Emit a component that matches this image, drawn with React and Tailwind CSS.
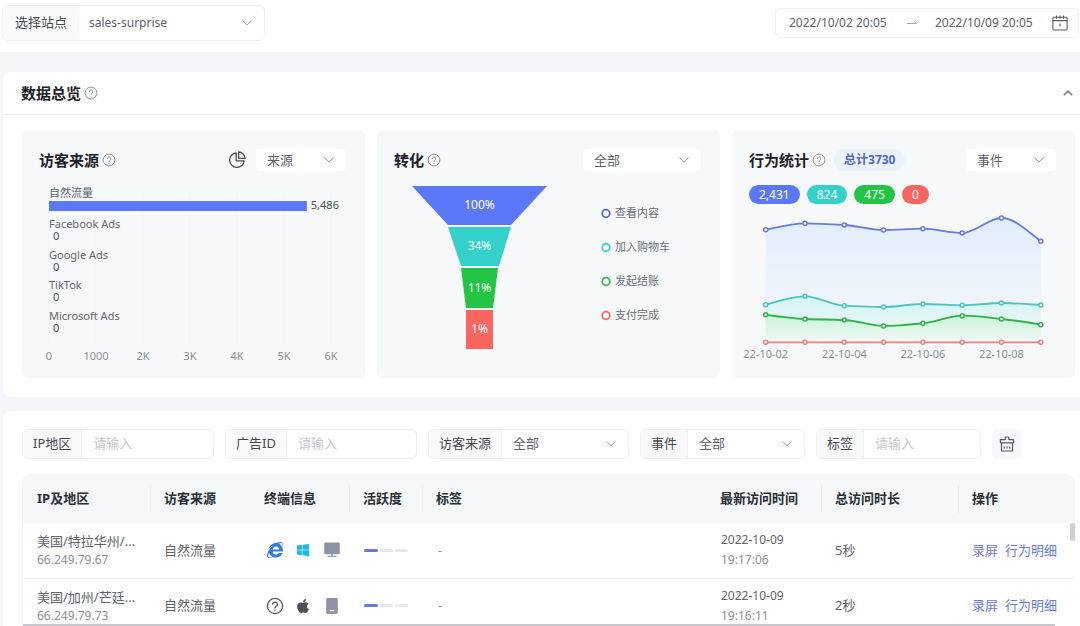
import React from "react";
import { FaInternetExplorer, FaWindows, FaApple } from "react-icons/fa";

const BLUE = "#5b78fb";
const TEAL = "#33d1c9";
const GREEN = "#23c343";
const RED = "#fb6560";

function HelpIcon({ className = "size-[14px] text-[#8f949c]" }) {
  return (
    <svg viewBox="0 0 14 14" className={"shrink-0 " + className} fill="none" stroke="currentColor" aria-hidden="true">
      <circle cx="7" cy="7" r="5.9" strokeWidth="1" />
      <path d="M5.2 5.7a1.8 1.8 0 1 1 2.7 1.6c-.6.35-.9.65-.9 1.3" strokeWidth="1" strokeLinecap="round" />
      <circle cx="7" cy="10.3" r=".6" fill="currentColor" stroke="none" />
    </svg>
  );
}

function Chevron({ className }) {
  return (
    <svg viewBox="0 0 10 6" className={"pointer-events-none absolute top-1/2 h-[6px] w-[10px] -translate-y-1/2 " + className} fill="none" stroke="#a3a8b0" strokeWidth="1" strokeLinecap="round" strokeLinejoin="round" aria-hidden="true">
      <path d="M.8.8 5 5 9.2.8" />
    </svg>
  );
}

function SmallSelect({ label, value, className }) {
  return (
    <div className={"relative h-[22px] rounded-[5px] bg-white " + className}>
      <select aria-label={label} defaultValue={value} className="block h-full w-full appearance-none bg-transparent pl-[11px] pr-6 text-[13px] leading-5 text-[#5d626b] outline-none">
        <option>{value}</option>
      </select>
      <Chevron className="right-3" />
    </div>
  );
}

function Field({ id, label, value, className }) {
  return (
    <div className={"flex h-[30px] min-w-0 overflow-hidden rounded-[6px] border border-[#eff0f2] " + className}>
      <label htmlFor={id} className="flex shrink-0 items-center whitespace-nowrap border-r border-[#eff0f2] bg-[#fafafb] px-[10px] text-[13px] text-[#45494f]">
        {label}
      </label>
      {value ? (
        <div className="relative min-w-0 flex-1">
          <select id={id} defaultValue={value} className="h-full w-full appearance-none bg-transparent pl-[11px] pr-6 text-[13px] text-[#5d626b] outline-none">
            <option>{value}</option>
          </select>
          <Chevron className="right-3" />
        </div>
      ) : (
        <input id={id} type="text" placeholder="请输入" className="w-full min-w-0 flex-1 px-[11px] text-[13px] text-[#5d626b] outline-none placeholder:text-[#c4c7cc]" />
      )}
    </div>
  );
}

function CardTitle({ children }) {
  return (
    <div className="flex items-center gap-[3px]">
      <h3 className="whitespace-nowrap text-[15px] font-bold leading-[22px] text-[#1d2129]">{children}</h3>
      <HelpIcon />
    </div>
  );
}

const sources = [
  { name: "自然流量", value: 5486 },
  { name: "Facebook Ads", value: 0 },
  { name: "Google Ads", value: 0 },
  { name: "TikTok", value: 0 },
  { name: "Microsoft Ads", value: 0 },
];
const ticks = ["0", "1000", "2K", "3K", "4K", "5K", "6K"];

function SourceChart() {
  return (
    <svg viewBox="0 0 343 200" className="block w-full text-[11px]" role="img" aria-label="访客来源">
      {ticks.map((t, i) => (
        <g key={t}>
          <line x1={27 + i * 47} x2={27 + i * 47} y1="14" y2="166" stroke="#f3f5f8" />
          <text x={27 + i * 47} y="182" textAnchor="middle" fill="#8a9099">{t}</text>
        </g>
      ))}
      {sources.map((s, i) => {
        const w = (s.value / 6000) * 282;
        return (
          <g key={s.name}>
            <text x="27" y={19 + i * 30.8} fill="#5f6670">{s.name}</text>
            <rect x="27" y={23 + i * 30.8} width={w} height="10" fill={BLUE} />
            <text x={31 + w} y={31 + i * 30.8} fill="#4a4f57">{s.value.toLocaleString("en-US")}</text>
          </g>
        );
      })}
    </svg>
  );
}

const funnel = [
  { name: "查看内容", pct: "100%", color: BLUE, ring: "#5468cf", points: "35,8 170,8 134,47 71,47" },
  { name: "加入购物车", pct: "34%", color: TEAL, ring: TEAL, points: "71,49 134,49 122,88 84,88" },
  { name: "发起结账", pct: "11%", color: GREEN, ring: "#35b556", points: "84,90 121,90 116,130 89,130" },
  { name: "支付完成", pct: "1%", color: RED, ring: RED, points: "89,132 116,132 116,171 89,171" },
];

function FunnelChart() {
  return (
    <svg viewBox="0 0 343 200" className="block w-full" role="img" aria-label="转化">
      {funnel.map((f, i) => (
        <g key={f.name}>
          <polygon points={f.points} fill={f.color} />
          <text x="102.5" y={30.5 + i * 41.5} textAnchor="middle" fill="#fff" className="text-[12px]">{f.pct}</text>
          <circle cx="229" cy={35.5 + i * 34} r="3.8" fill="#fff" stroke={f.ring} strokeWidth="1.8" />
          <text x="238" y={38.5 + i * 34} fill="#6b7078" className="text-[11px]">{f.name}</text>
        </g>
      ))}
    </svg>
  );
}

const series = [
  { line: "#6a7bd6", top: "#dfecfd", ys: [19.7, 13.3, 15, 20, 18.7, 23, 8, 31.3] },
  { line: "#4cc4be", top: "#d2f6f1", ys: [94.7, 86.3, 95.7, 97, 94, 95.3, 93, 95] },
  { line: "#2fb04a", top: "#cbf4d0", ys: [104.7, 109, 110, 116, 113.3, 105.7, 109, 114.7] },
  { line: "#ee7f7c", top: "#fde2e1", ys: [132.3, 132.3, 132.3, 132.3, 132.3, 132.3, 132.3, 132.3] },
];
const STEP = 39.3;
const X0 = 33.7;

// Cubic path whose tangents are flat at every local extreme.
function smooth(ys) {
  const d = ys.slice(1).map((y, i) => (y - ys[i]) / STEP);
  const m = ys.map((_, i) => {
    if (i === 0) return d[0] * 1.3;
    if (i === ys.length - 1) return d[i - 1] * 1.3;
    return d[i - 1] * d[i] <= 0 ? 0 : (2 * d[i - 1] * d[i]) / (d[i - 1] + d[i]);
  });
  let path = `M${X0},${ys[0]}`;
  for (let i = 1; i < ys.length; i++) {
    const x = X0 + i * STEP;
    const k = STEP / 3;
    path += `C${x - STEP + k},${ys[i - 1] + m[i - 1] * k} ${x - k},${ys[i] - m[i] * k} ${x},${ys[i]}`;
  }
  return path;
}

function EventChart() {
  return (
    <svg viewBox="0 0 343 168" className="mt-[6px] block w-full" role="img" aria-label="行为统计">
      <defs>
        {series.map((s, i) => (
          <linearGradient key={i} id={"area" + i} x1="0" y1="0" x2="0" y2="1">
            <stop offset="0" stopColor={s.top} stopOpacity=".9" />
            <stop offset="1" stopColor={s.top} stopOpacity="0" />
          </linearGradient>
        ))}
      </defs>
      {series.map((s, i) => {
        const p = smooth(s.ys);
        return (
          <g key={i}>
            <path d={`${p}V132.3H${X0}Z`} fill={`url(#area${i})`} />
            <path d={p} fill="none" stroke={s.line} strokeWidth="1.8" />
            {s.ys.map((y, j) => (
              <circle key={j} cx={X0 + j * STEP} cy={y} r="2" fill="#fff" stroke={s.line} strokeWidth="1.5" />
            ))}
          </g>
        );
      })}
      {["22-10-02", "22-10-04", "22-10-06", "22-10-08"].map((t, i) => (
        <text key={t} x={X0 + i * 2 * STEP} y="148" textAnchor="middle" fill="#8a9099" className="text-[11px]">{t}</text>
      ))}
    </svg>
  );
}

function MonitorIcon() {
  return (
    <svg viewBox="0 0 16 16" className="size-4" fill="#8e92a3" role="img" aria-label="桌面端">
      <rect x=".2" y=".6" width="15.6" height="11.6" rx="1.2" />
      <path d="M7.2 12h1.6v2H7.2z" />
      <path d="M3.6 13.8h8.8v1.1H3.6z" />
    </svg>
  );
}

function PhoneIcon() {
  return (
    <svg viewBox="0 0 16 16" className="size-4" role="img" aria-label="移动端">
      <rect x="2.2" y="0" width="11.6" height="16" rx="1.4" fill="#8e92a3" />
      <path d="M5.8 12.6h4.4" stroke="#fff" strokeWidth="1.2" />
    </svg>
  );
}

const rows = [
  {
    place: "美国/特拉华州/...", ip: "66.249.79.67", time: "19:17:06", stay: "5秒",
    icons: [<FaInternetExplorer key="b" className="size-4 text-[#2f7fd8]" />, <FaWindows key="o" className="size-[14px] text-[#22b8e6]" />, <MonitorIcon key="d" />],
  },
  {
    place: "美国/加州/芒廷...", ip: "66.249.79.73", time: "19:16:11", stay: "2秒",
    icons: [<HelpIcon key="b" className="size-[18px] text-[#55595f]" />, <FaApple key="o" className="size-4 text-[#4b4f58]" />, <PhoneIcon key="d" />],
  },
];

const columns = [
  { name: "IP及地区", divider: "border-transparent" },
  { name: "访客来源", divider: "border-[#eff1f4]" },
  { name: "终端信息", divider: "border-transparent" },
  { name: "活跃度", divider: "border-[#eaedf0]" },
  { name: "标签", divider: "border-[#eff1f4]" },
  { name: "最新访问时间", divider: "border-transparent" },
  { name: "总访问时长", divider: "border-[#e8ebee]" },
  { name: "操作", divider: "border-[#e8ebee]" },
];

export default function App() {
  return (
    <div className="flex h-screen flex-col overflow-hidden bg-[#f4f6f9] font-['Noto_Sans','Noto_Sans_CJK_SC',sans-serif] text-[#5d626b]">
      <header className="flex h-[52px] shrink-0 items-start justify-between bg-white pl-[2px] pr-px pt-[5px]">
        <div className="flex h-9 w-[263px] overflow-hidden rounded-[6px] border border-[#eff0f2]">
          <label htmlFor="site" className="flex shrink-0 items-center bg-[#fafafb] px-3 text-[13px] text-[#45494f]">选择站点</label>
          <div className="relative flex-1">
            <select id="site" defaultValue="sales-surprise" className="h-full w-full appearance-none bg-transparent pl-[10px] pr-8 text-[12px] text-[#5d626b] outline-none">
              <option>sales-surprise</option>
            </select>
            <Chevron className="right-3" />
          </div>
        </div>
        <div className="mt-[3px] flex h-[30px] w-[304px] items-center rounded-[6px] border border-[#eff0f2] pl-[13px] pr-[10px]">
          <input aria-label="开始时间" defaultValue="2022/10/02 20:05" className="w-[102px] text-[12px] outline-none" />
          <svg viewBox="0 0 10 6" className="ml-4 mr-[18px] h-[6px] w-[10px] shrink-0" fill="none" stroke="#a3a8b0" aria-hidden="true">
            <path d="M0 3.5h9.5L6.8 1" />
          </svg>
          <input aria-label="结束时间" defaultValue="2022/10/09 20:05" className="min-w-0 flex-1 text-[12px] outline-none" />
          <button type="button" aria-label="打开日历" className="shrink-0">
            <svg viewBox="0 0 16 16" className="size-4" fill="none" stroke="#565b63" strokeWidth="1.1">
              <rect x=".9" y="2.2" width="14.2" height="12.8" rx="1" />
              <path d="M1 5.6h14M4.5.4v3.4M8 .4v3.4M11.5.4v3.4M8 8.6v3" />
            </svg>
          </button>
        </div>
      </header>

      <section className="ml-[3px] mt-5 shrink-0 rounded-l-[8px] bg-white">
        <div className="flex h-[43px] items-center justify-between border-b border-[#f1f2f4] pl-[18px] pr-[6px]">
          <div className="flex items-center gap-[3px]">
            <h2 className="text-[15px] font-bold text-[#1d2129]">数据总览</h2>
            <HelpIcon />
          </div>
          <button type="button" aria-label="收起" className="p-px">
            <svg viewBox="0 0 10 6" className="h-[6px] w-[10px]" fill="none" stroke="#80858d" strokeWidth="1.7">
              <path d="M.8 5.2 5 1.2l4.2 4" />
            </svg>
          </button>
        </div>
        <div className="grid grid-cols-3 gap-3 pb-[19px] pl-[19px] pr-[5px] pt-[15px]">
          <article className="rounded-[6px] bg-[#f6f8fa] pt-[19px]">
            <div className="flex h-[22px] items-center justify-between pl-[17px] pr-[19px]">
              <CardTitle>访客来源</CardTitle>
              <div className="flex items-center gap-[10px]">
                <button type="button" aria-label="切换饼图">
                  <svg viewBox="0 0 18 18" className="size-[18px]" fill="none" stroke="#4a4f57" strokeWidth="1.3">
                    <path d="M8.2 1.8A7.3 7.3 0 1 0 16.2 9.8H8.2z" strokeLinejoin="round" />
                    <path d="M10.6 1v6.4H17A6.6 6.6 0 0 0 10.6 1z" strokeLinejoin="round" />
                  </svg>
                </button>
                <SmallSelect label="来源" value="来源" className="w-[90px]" />
              </div>
            </div>
            <div className="pt-[7px]"><SourceChart /></div>
          </article>
          <article className="rounded-[6px] bg-[#f6f8fa] pt-[19px]">
            <div className="flex h-[22px] items-center justify-between pl-[17px] pr-[19px]">
              <CardTitle>转化</CardTitle>
              <SmallSelect label="转化范围" value="全部" className="w-[118px]" />
            </div>
            <div className="pt-[7px]"><FunnelChart /></div>
          </article>
          <article className="rounded-[6px] bg-[#f6f8fa] pt-[19px]">
            <div className="flex h-[22px] items-center justify-between pl-[17px] pr-[19px]">
              <div className="flex items-center gap-2">
                <CardTitle>行为统计</CardTitle>
                <span className="whitespace-nowrap rounded-full bg-[#ecf3fe] px-[10px] text-[12px] font-bold leading-[22px] text-[#5066cf]">总计3730</span>
              </div>
              <SmallSelect label="统计维度" value="事件" className="w-[90px]" />
            </div>
            <div className="mt-[14px] flex gap-[7px] px-[17px] text-[12px] leading-[19px] text-white">
              <span className="rounded-full bg-[#5b78fb] px-[10px]">2,431</span>
              <span className="rounded-full bg-[#33d1c9] px-[10px]">824</span>
              <span className="rounded-full bg-[#23c343] px-[10px]">475</span>
              <span className="rounded-full bg-[#fb6560] px-[10px]">0</span>
            </div>
            <EventChart />
          </article>
        </div>
      </section>

      <section className="ml-[3px] mt-[14px] flex min-h-0 flex-1 flex-col rounded-tl-[8px] bg-white pl-[19px] pr-[5px] pt-[18px]">
        <form className="flex shrink-0 items-center gap-[11px]">
          <Field id="ip" label="IP地区" className="w-[192px]" />
          <Field id="ad" label="广告ID" className="w-[192px]" />
          <Field id="source" label="访客来源" value="全部" className="w-[201px]" />
          <Field id="event" label="事件" value="全部" className="w-[165px]" />
          <Field id="tag" label="标签" className="w-[165px]" />
          <button type="button" aria-label="清空筛选" className="flex h-[30px] w-[30px] shrink-0 items-center justify-center rounded-[6px] bg-[#f6f8fa]">
            <svg viewBox="0 0 16 16" className="size-4" fill="none" stroke="#565b63" strokeWidth="1.2" strokeLinejoin="round">
              <path d="M6.2 3.6V1h3.6v2.6h4.8v3.2H1.4V3.6zM2.5 6.8V15h11V6.8" />
              <path d="M5.3 10.4v2.2M8 10.4v2.2M10.7 10.4v2.2" />
            </svg>
          </button>
        </form>

        <div className="relative mt-[15px] min-h-0 flex-1 overflow-hidden rounded-t-[8px] border-l border-[#f1f2f4]">
          <table className="w-full table-fixed border-collapse text-left text-[13px]">
            <colgroup>
              <col className="w-[127px]" />
              <col className="w-[100px]" />
              <col className="w-[99px]" />
              <col className="w-[73px]" />
              <col />
              <col className="w-[115px]" />
              <col className="w-[137px]" />
              <col className="w-[117px]" />
            </colgroup>
            <thead className="bg-[#f5f7f9]">
              <tr className="h-[49px]">
                {columns.map((c) => (
                  <th key={c.name} scope="col" className="p-0 font-bold text-[#2a2e35]">
                    <div className={"flex h-7 items-center whitespace-nowrap border-l pl-[13px] " + c.divider}>{c.name}</div>
                  </th>
                ))}
              </tr>
            </thead>
            <tbody>
              {rows.map((r) => (
                <tr key={r.ip} className="h-[55px] border-b border-[#f1f2f4]">
                  <td className="p-0 pl-[14px]">
                    <div className="whitespace-nowrap leading-5">{r.place}</div>
                    <div className="text-[12px] leading-[18px] text-[#8a9099]">{r.ip}</div>
                  </td>
                  <td className="p-0 pl-[14px] whitespace-nowrap">自然流量</td>
                  <td className="p-0 pl-[15px]">
                    <div className="grid w-[77px] grid-cols-3 items-center justify-items-center gap-x-[9px]">{r.icons}</div>
                  </td>
                  <td className="p-0 pl-[15px]">
                    <div className="flex gap-[2px]">
                      <span className="h-[3px] w-[14px] rounded-full bg-[#667bd8]" />
                      <span className="h-[3px] w-[13px] rounded-full bg-[#e6e8ec]" />
                      <span className="h-[3px] w-[13px] rounded-full bg-[#e6e8ec]" />
                    </div>
                  </td>
                  <td className="p-0 pl-4 text-[#8a9099]">-</td>
                  <td className="p-0 pl-[15px] text-[12px]">
                    <div className="leading-5">2022-10-09</div>
                    <div className="leading-5 text-[#8a9099]">{r.time}</div>
                  </td>
                  <td className="p-0 pl-[14px]">{r.stay}</td>
                  <td className="p-0 pl-[14px]">
                    <div className="flex gap-[7px] whitespace-nowrap text-[#6b7ddb]">
                      <a href="#record">录屏</a>
                      <a href="#detail">行为明细</a>
                    </div>
                  </td>
                </tr>
              ))}
            </tbody>
          </table>
          <div className="absolute right-0 top-[49px] h-[18px] w-[5px] rounded-full bg-[#cdcfd2]" />
          <div className="absolute bottom-0 left-0 right-5 h-[2px] bg-[#c6c8cb]" />
        </div>
      </section>
    </div>
  );
}
